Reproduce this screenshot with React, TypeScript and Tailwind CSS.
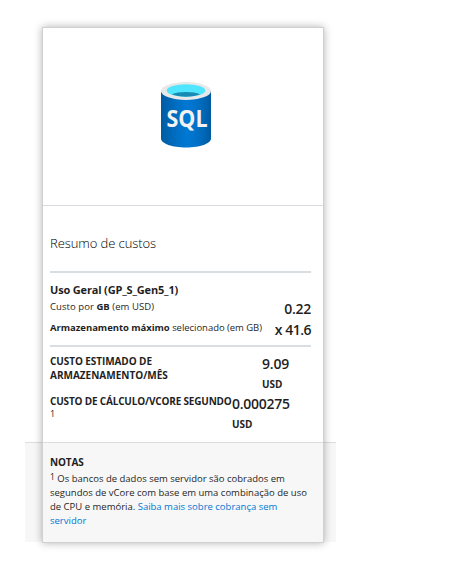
function SqlIcon() {
  return (
    <svg width="52" height="68" viewBox="0 0 52 68" aria-label="SQL">
      <defs>
        <linearGradient id="body" x1="0" x2="1" y1="0" y2="0">
          <stop offset="0" stopColor="#005ba1" />
          <stop offset="0.07" stopColor="#0060a9" />
          <stop offset="0.36" stopColor="#0071c8" />
          <stop offset="0.52" stopColor="#0078d4" />
          <stop offset="0.64" stopColor="#0074cd" />
          <stop offset="0.82" stopColor="#006abb" />
          <stop offset="1" stopColor="#005ba1" />
        </linearGradient>
      </defs>
      <path d="M1 10v47.500c0 5 11.200 9 25 9s25-4 25-9V10z" fill="url(#body)" />
      <ellipse cx="26" cy="10" rx="25" ry="9" fill="#e8e8e8" />
      <ellipse cx="26" cy="9.500" rx="19.300" ry="6.200" fill="#50e6ff" />
      <path d="M26 11c-5.500 0-10.500.9-14.200 2.200C15.300 14.800 20.300 15.700 26 15.700s10.700-.9 14.200-2.500C36.500 11.900 31.500 11 26 11z" fill="#198ab3" />
      <text x="27" y="46" textAnchor="middle" textLength="41" lengthAdjust="spacingAndGlyphs" fontFamily="Open Sans" fontWeight="700" fontSize="22.500" fill="#f2f2f2">SQL</text>
    </svg>
  );
}

export default function App() {
  return (
    <main className="h-[562px] w-[458px] overflow-hidden bg-white pl-[43px] pt-[28px] font-['Open_Sans','Noto_Sans',sans-serif] text-[10px] text-[#1f1f1f]">
      <article className="relative flex h-[514px] w-[280px] flex-col">
        <header className="flex h-[178px] justify-center border-b border-[#d6dade] pl-[6px] pt-[53px]">
          <SqlIcon />
        </header>
        <section className="flex h-[236px] flex-col pl-[7px] pr-[12px]">
          <h2 className="h-[67px] shrink-0 border-b-2 border-[#d9dee2] pt-[27px] text-[13px] font-light leading-[20px] tracking-[-0.08px] text-black">Resumo de custos</h2>
          <div className="flex h-[74px] shrink-0 flex-col border-b-2 border-[#d9dee2] pt-[9px]">
            <h3 className="text-[11px] font-bold leading-[16px] tracking-[-0.17px]">Uso Geral (GP_S_Gen5_1)</h3>
            <div className="flex h-[21px] justify-between whitespace-nowrap">
              <p className="text-[9.5px] leading-[18px] tracking-[0.06px]">Custo por <b>GB</b> (em USD)</p>
              <span className="pt-[1px] text-[14px] font-semibold leading-[20px] tracking-[-0.25px]">0.22</span>
            </div>
            <div className="flex justify-between whitespace-nowrap">
              <p className="text-[9.5px] leading-[18px] tracking-[-0.04px]"><b>Armazenamento máximo</b> selecionado (em GB)</p>
              <span className="pt-[1px] text-[14px] font-semibold leading-[20px] tracking-[-0.5px]">x 41.6</span>
            </div>
          </div>
          <div className="flex h-[40px] shrink-0 pt-[7px] font-bold">
            <p className="w-[212px] leading-[14px]"><span className="tracking-[-0.08px]">CUSTO ESTIMADO DE</span><br />ARMAZENAMENTO/MÊS</p>
            <p className="flex flex-col"><span className="text-[14px] font-semibold leading-[20px] tracking-[-0.2px]">9.09</span><span className="leading-[20px]">USD</span></p>
          </div>
          <div className="flex pt-[7px] font-bold">
            <div className="w-[182px] shrink-0 whitespace-nowrap"><p className="leading-[14px] tracking-[-0.18px]">CUSTO DE CÁLCULO/VCORE SEGUNDO</p><p className="text-[9px] font-normal leading-[12px]">1</p></div>
            <p className="flex flex-col"><span className="text-[14px] font-semibold leading-[20px] tracking-[-0.25px]">0.000275</span><span className="leading-[20px]">USD</span></p>
          </div>
        </section>
        <footer className="-mx-[18px] h-[100px] w-[311px] border-t border-[#dcdddd] bg-[#f7f7f7] pl-[25px] pt-[12px]">
          <h3 className="font-bold leading-[14px] tracking-[-0.15px]">NOTAS</h3>
          <p className="mt-[3px] whitespace-nowrap text-[9.5px] leading-[14px]"><span className="relative -top-[2px] text-[8.5px] leading-none">1</span> Os bancos de dados sem servidor são cobrados em<br />segundos de vCore com base em uma combinação de uso<br />de CPU e memória. <a className="text-[#0078d4]">Saiba mais sobre cobrança sem<br />servidor</a></p>
        </footer>
        <div className="pointer-events-none absolute inset-0 shadow-[0_0_0_1px_#d0d0d0,0_0_8px_1px_rgba(0,0,0,0.3)]" />
      </article>
    </main>
  );
}
